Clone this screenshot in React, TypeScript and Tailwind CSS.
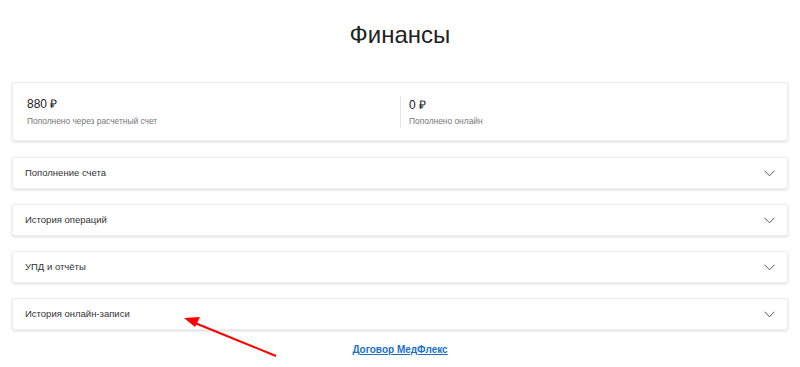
import React from "react";

const Chevron = () => (
  <svg width="11" height="7" viewBox="0 0 11 7" fill="none">
    <path d="M0.8 1L5.5 5.8L10.2 1" stroke="#555" strokeWidth="1" strokeLinecap="round" strokeLinejoin="round" />
  </svg>
);

const items = ["Пополнение счета", "История операций", "УПД и отчёты", "История онлайн-записи"];

export default function App() {
  return (
    <div className="relative w-[800px] h-[367px] bg-white overflow-hidden" style={{ fontFamily: "'Liberation Sans', Arial, sans-serif" }}>
      <div className="px-3">
        <h1 className="text-center text-[24px] leading-[32px] text-[#222] pt-[19px] h-[82px]">Финансы</h1>
        <div className="h-[59px] rounded-[3px] bg-white shadow-[0_1px_3px_rgba(0,0,0,0.15)] border border-[#eee] grid grid-cols-2 items-center px-[14px]">
          <div className="flex flex-col">
            <span className="text-[12px] leading-[16px] text-[#222]">880 ₽</span>
            <span className="text-[8.4px] leading-[12px] text-[#777] mt-[3px]">Пополнено через расчетный счет</span>
          </div>
          <div className="flex flex-col pl-[8px] border-l border-[#e5e5e5] py-[1px]">
            <span className="text-[12px] leading-[16px] text-[#222]">0 ₽</span>
            <span className="text-[8.4px] leading-[12px] text-[#777] mt-[2px]">Пополнено онлайн</span>
          </div>
        </div>
        <div className="flex flex-col gap-[15px] mt-[16px]">
          {items.map((t) => (
            <div key={t} className="h-[32px] rounded-[3px] bg-white shadow-[0_1px_3px_rgba(0,0,0,0.15)] border border-[#eee] flex items-center justify-between pl-[12px] pr-[12px]">
              <span className="text-[9.5px] text-[#333]">{t}</span>
              <Chevron />
            </div>
          ))}
        </div>
        <div className="text-center mt-[6px]">
          <a href="#" className="text-[10px] font-bold text-[#1a6fc4] underline">Договор МедФлекс</a>
        </div>
      </div>
      <svg className="absolute left-0 top-0" width="800" height="367" style={{ pointerEvents: "none" }}>
        <line x1="276" y1="356" x2="195" y2="323" stroke="#f00" strokeWidth="2" />
        <polygon points="184,318 200,317 195,327" fill="#f00" />
      </svg>
    </div>
  );
}
